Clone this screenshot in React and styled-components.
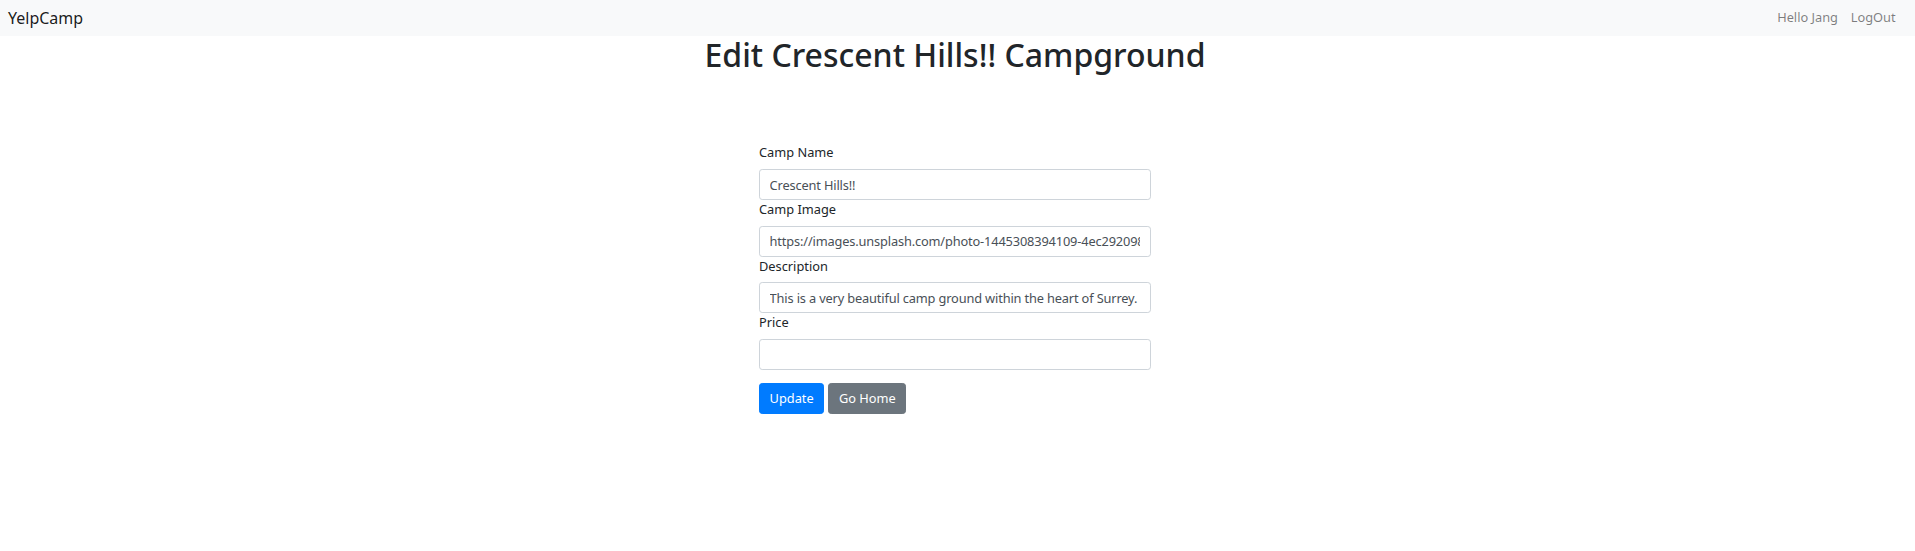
import React from 'react';
import styled, { createGlobalStyle } from 'styled-components';

const GlobalStyle = createGlobalStyle`
  html, body {
    margin: 0;
    padding: 0;
    background: #fff;
  }
  body {
    font-family: "Noto Sans", "Open Sans", sans-serif;
    font-size: 12.8px;
    line-height: 1.5;
    color: #212529;
  }
  * { box-sizing: border-box; }
`;

const Navbar = styled.nav`
  height: 36px;
  background-color: #f8f9fa;
  display: flex;
  align-items: center;
  justify-content: space-between;
  padding: 0 13px 0 8px;
`;

const Brand = styled.a`
  font-size: 16px;
  color: rgba(0, 0, 0, 0.9);
  text-decoration: none;
  line-height: 24px;
`;

const NavLinks = styled.div`
  display: flex;
`;

const NavLink = styled.a`
  font-size: 12.8px;
  color: rgba(0, 0, 0, 0.5);
  text-decoration: none;
  padding: 0 6.4px;
`;

const Main = styled.main`
  padding-right: 5px;
`;

const Title = styled.h1`
  margin: 0 0 6.4px;
  text-align: center;
  font-size: 32px;
  font-weight: 500;
  line-height: 38.4px;
`;

const Form = styled.form`
  width: 392px;
  margin: 69px auto 0;
`;

const Label = styled.label`
  display: block;
  margin-bottom: 6.4px;
  line-height: 19.2px;
`;

const Input = styled.input`
  display: block;
  width: 100%;
  height: 31px;
  padding: 4.8px 9.6px;
  font-family: inherit;
  font-size: 12.8px;
  letter-spacing: -0.15px;
  line-height: 1.5;
  color: #495057;
  background-color: #fff;
  border: 1px solid #ced4da;
  border-radius: 3.2px;
  outline: none;
`;

const Actions = styled.div`
  display: flex;
  gap: 4px;
  margin-top: 13px;
`;

const Button = styled.button`
  height: 31px;
  font-family: inherit;
  font-size: 12.8px;
  line-height: 1.5;
  padding: 4.8px 9.6px;
  border-radius: 3.2px;
  border: 1px solid ${p => p.$bg};
  background-color: ${p => p.$bg};
  color: #fff;
  cursor: pointer;
`;

const fields = [
  { label: 'Camp Name', value: 'Crescent Hills!!' },
  { label: 'Camp Image', value: 'https://images.unsplash.com/photo-1445308394109-4ec2920981b1?ixlib=rb-1.2.1' },
  { label: 'Description', value: 'This is a very beautiful camp ground within the heart of Surrey. It has great views.' },
  { label: 'Price', value: '' },
];

export default function App() {
  return (
    <>
      <GlobalStyle />
      <Navbar>
        <Brand href="#">YelpCamp</Brand>
        <NavLinks>
          <NavLink href="#">Hello Jang</NavLink>
          <NavLink href="#">LogOut</NavLink>
        </NavLinks>
      </Navbar>
      <Main>
        <Title>Edit Crescent Hills!! Campground</Title>
        <Form onSubmit={e => e.preventDefault()}>
          {fields.map(f => (
            <div key={f.label}>
              <Label>{f.label}</Label>
              <Input type="text" defaultValue={f.value} />
            </div>
          ))}
          <Actions>
            <Button $bg="#007bff">Update</Button>
            <Button type="button" $bg="#6c757d">Go Home</Button>
          </Actions>
        </Form>
      </Main>
    </>
  );
}
